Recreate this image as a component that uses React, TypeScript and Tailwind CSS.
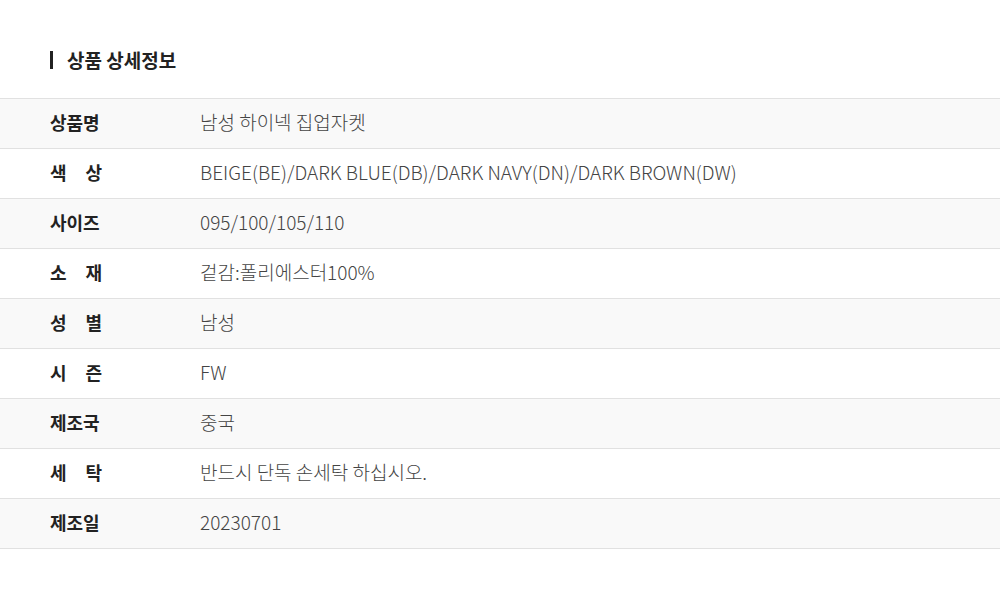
const rows: { label: string; value: string }[] = [
  { label: "상품명", value: "남성 하이넥 집업자켓" },
  { label: "색상", value: "BEIGE(BE)/DARK BLUE(DB)/DARK NAVY(DN)/DARK BROWN(DW)" },
  { label: "사이즈", value: "095/100/105/110" },
  { label: "소재", value: "겉감:폴리에스터100%" },
  { label: "성별", value: "남성" },
  { label: "시즌", value: "FW" },
  { label: "제조국", value: "중국" },
  { label: "세탁", value: "반드시 단독 손세탁 하십시오." },
  { label: "제조일", value: "20230701" },
];

export default function App() {
  return (
    <div className="w-[1000px] h-[598px] bg-white font-['Noto_Sans_CJK_KR','Noto_Sans',sans-serif]">
      <div className="pt-[47px] px-[50px] h-[98px]">
        <h2 className="flex items-center gap-[14px] text-[19px] font-bold text-[#222] leading-[26px]">
          <span className="w-[3px] h-[18px] bg-[#222]" />
          상품 상세정보
        </h2>
      </div>
      <div className="border-t border-[#e1e1e1]">
        {rows.map(({ label, value }, i) => (
          <div
            key={label}
            className={`flex items-center h-[50px] pb-[2px] border-b border-[#e1e1e1] ${
              i % 2 === 0 ? "bg-[#f9f9f9]" : "bg-white"
            }`}
          >
            <div className="w-[200px] shrink-0 pl-[50px] text-[18px] font-bold text-[#222]">
              {label.length === 2 ? (
                <span className="flex justify-between w-[52px]">
                  <span>{label[0]}</span>
                  <span>{label[1]}</span>
                </span>
              ) : (
                label
              )}
            </div>
            <div className="text-[19px] font-light text-[#444]">{value}</div>
          </div>
        ))}
      </div>
    </div>
  );
}
